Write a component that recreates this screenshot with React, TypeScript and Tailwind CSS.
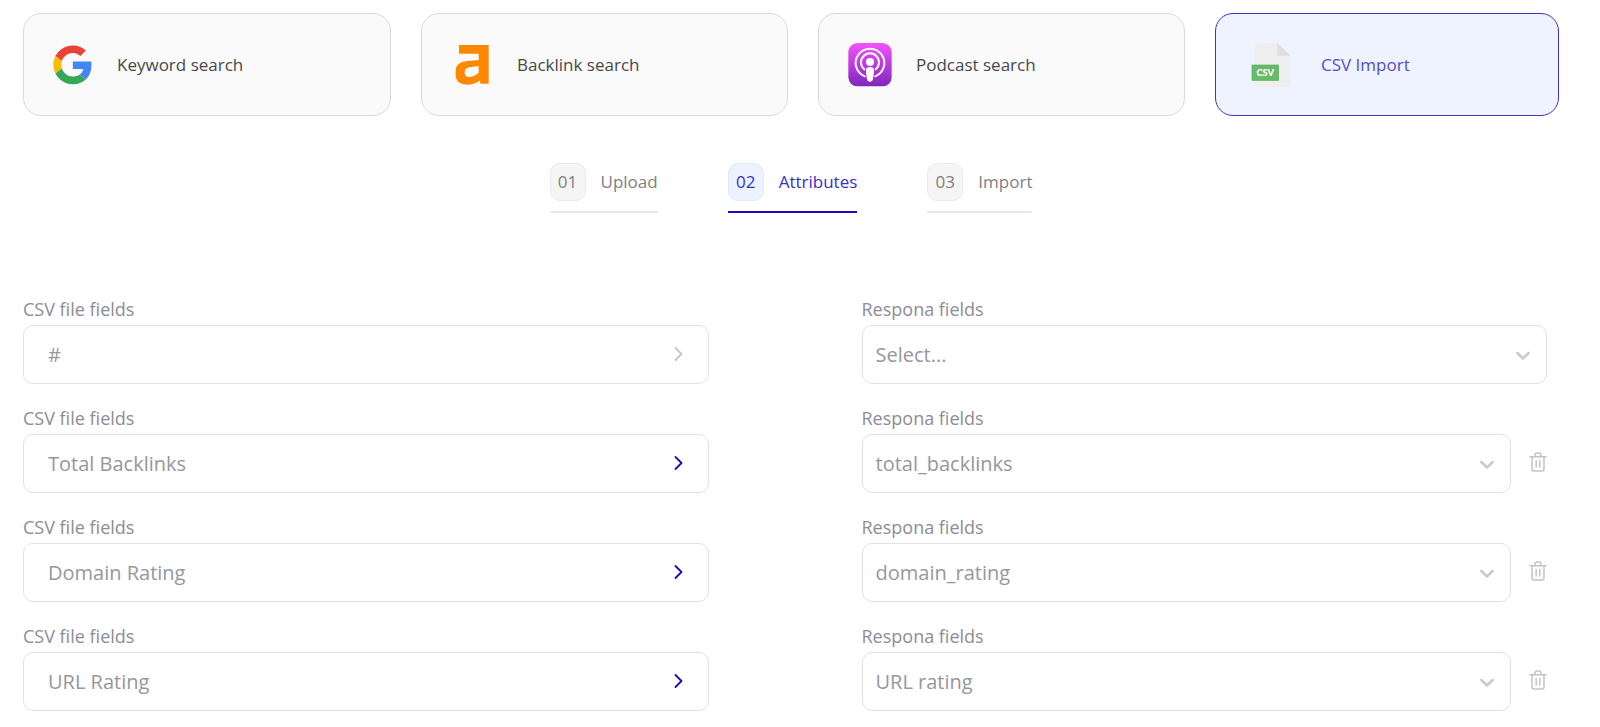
import React, { useState } from "react";
import clsx from "clsx";

interface SearchOption {
  id: string;
  label: string;
  icon: React.FC;
  spacing: string;
}

interface FieldMapping {
  id: string;
  csvField: string;
  responaField: string;
}

const GoogleIcon: React.FC = () => (
  <svg viewBox="0 0 44 44" className="size-11 shrink-0" aria-hidden="true">
    <g transform="translate(3.4 2.4) scale(.81)">
      <path
        fill="#EA4335"
        d="M24 9.5c3.54 0 6.71 1.22 9.21 3.6l6.85-6.85C35.9 2.38 30.47 0 24 0 14.62 0 6.51 5.38 2.56 13.22l7.98 6.19C12.43 13.72 17.74 9.5 24 9.5z"
      />
      <path
        fill="#4285F4"
        d="M46.98 24.55c0-1.57-.15-3.09-.38-4.55H24v9.02h12.94c-.58 2.96-2.26 5.48-4.78 7.18l7.73 6c4.51-4.18 7.09-10.36 7.09-17.65z"
      />
      <path
        fill="#FBBC05"
        d="M10.53 28.59c-.48-1.45-.76-2.99-.76-4.59s.27-3.14.76-4.59l-7.98-6.19C.92 16.46 0 20.12 0 24c0 3.88.92 7.54 2.56 10.78l7.97-6.19z"
      />
      <path
        fill="#34A853"
        d="M24 48c6.48 0 11.93-2.13 15.89-5.81l-7.73-6c-2.15 1.45-4.92 2.3-8.16 2.3-6.26 0-11.57-4.22-13.47-9.91l-7.98 6.19C6.51 42.62 14.62 48 24 48z"
      />
    </g>
  </svg>
);

const AhrefsIcon: React.FC = () => (
  <svg viewBox="0 1 132 132" className="size-11 shrink-0" aria-hidden="true">
    <path
      fill="#FF8800"
      fillRule="evenodd"
      d="M27 7H116V123H91L90 113C80 122 68 126 54 126C30 126 17 115 17 96V86C17 66 29 58 52 55L86 52V33H27ZM86 70L58 74C48 76 44 81 44 90C44 98 49 103 57 103C68 103 78 98 86 91Z"
    />
  </svg>
);

const PodcastIcon: React.FC = () => (
  <svg viewBox="0 3 132 132" className="size-11 shrink-0" aria-hidden="true">
    <defs>
      <linearGradient id="podcast-bg" x1="0" y1="0" x2="0" y2="1">
        <stop offset="0" stopColor="#F452FF" />
        <stop offset="1" stopColor="#8026BD" />
      </linearGradient>
    </defs>
    <rect x="1" y="3" width="130" height="130" rx="27" fill="url(#podcast-bg)" />
    <g fill="none" stroke="#fff" strokeLinecap="round">
      <path strokeWidth="6" d="M50 103A43 43 0 1 1 82 103" />
      <path strokeWidth="6" d="M49 82A27 27 0 1 1 83 82" />
    </g>
    <circle cx="66" cy="60" r="12" fill="#fff" />
    <path
      fill="#fff"
      d="M66 75C74 75 78 78 78 84C78 92 77 102 75 111C74 117 71 119 66 119C61 119 58 117 57 111C55 102 54 92 54 84C54 78 58 75 66 75Z"
    />
  </svg>
);

const CsvIcon: React.FC = () => (
  <svg viewBox="0 0 132 132" className="size-11 shrink-0" aria-hidden="true">
    <path fill="#EEEEEE" d="M18 0H85L124 36V132H18Z" />
    <path fill="#DFDFDF" d="M85 0L124 38H85Z" />
    <rect x="9" y="66" width="80" height="46" fill="#66BB6A" stroke="#57AE5B" strokeWidth="2" />
    <text
      x="49"
      y="99"
      textAnchor="middle"
      fill="#fff"
      fontFamily="Lato, sans-serif"
      fontWeight="900"
      fontSize="28"
    >
      CSV
    </text>
  </svg>
);

const ChevronRight: React.FC<{ className?: string }> = ({ className }) => (
  <svg viewBox="0 0 10 16" className={clsx("h-4 w-2.5 shrink-0", className)} aria-hidden="true">
    <path
      d="M1.5 1L7.5 7L1.5 13"
      fill="none"
      stroke="currentColor"
      strokeWidth="1.8"
      strokeLinecap="round"
      strokeLinejoin="round"
    />
  </svg>
);

const ChevronDown: React.FC = () => (
  <svg
    viewBox="0 0 20 20"
    fill="#cccccc"
    className="pointer-events-none absolute top-[18px] right-3 size-6"
    aria-hidden="true"
  >
    <path d="M4.516 7.548c0.436-0.446 1.043-0.481 1.576 0l3.908 3.747 3.908-3.747c0.533-0.481 1.141-0.446 1.574 0 0.436 0.445 0.408 1.197 0 1.615-0.406 0.418-4.695 4.502-4.695 4.502-0.217 0.223-0.502 0.335-0.787 0.335s-0.57-0.112-0.789-0.335c0 0-4.287-4.084-4.695-4.502s-0.436-1.17 0-1.615z" />
  </svg>
);

const TrashIcon: React.FC = () => (
  <svg
    viewBox="0 0 18 20"
    fill="none"
    stroke="currentColor"
    strokeWidth="1.5"
    strokeLinecap="round"
    strokeLinejoin="round"
    className="h-5 w-[18px]"
    aria-hidden="true"
  >
    <path d="M1 4.7H17" />
    <path d="M6 4.5V3C6 1.8 6.8 1 8 1H10C11.2 1 12 1.8 12 3V4.5" />
    <path d="M3 5V17C3 18.3 3.7 19 5 19H13C14.3 19 15 18.3 15 17V5" />
    <path d="M7.2 8.5V15M10.8 8.5V15" />
  </svg>
);

const searchOptions: SearchOption[] = [
  { id: "keyword", label: "Keyword search", icon: GoogleIcon, spacing: "pl-[26px] gap-[23px]" },
  { id: "backlink", label: "Backlink search", icon: AhrefsIcon, spacing: "pl-7 gap-[23px]" },
  { id: "podcast", label: "Podcast search", icon: PodcastIcon, spacing: "pl-[29px] gap-6" },
  { id: "csv", label: "CSV Import", icon: CsvIcon, spacing: "pl-[33px] gap-7" },
];

const steps = [
  { number: "01", label: "Upload" },
  { number: "02", label: "Attributes" },
  { number: "03", label: "Import" },
];

const initialMappings: FieldMapping[] = [
  { id: "position", csvField: "#", responaField: "" },
  { id: "total-backlinks", csvField: "Total Backlinks", responaField: "total_backlinks" },
  { id: "domain-rating", csvField: "Domain Rating", responaField: "domain_rating" },
  { id: "url-rating", csvField: "URL Rating", responaField: "URL rating" },
];

const responaFields = ["total_backlinks", "domain_rating", "URL rating"];

const CsvImport: React.FC = () => {
  const [selectedOption, setSelectedOption] = useState("csv");
  const [activeStep, setActiveStep] = useState("02");
  const [mappings, setMappings] = useState<FieldMapping[]>(initialMappings);

  const handleChange = (id: string, value: string) => {
    setMappings((prev) =>
      prev.map((row) => (row.id === id ? { ...row, responaField: value } : row))
    );
  };

  return (
    <main className="bg-white pt-[13px] pr-[41px] pb-4 pl-[23px] font-['Open_Sans',sans-serif]">
      <div className="grid grid-cols-[368fr_367fr_367fr_344fr] gap-[30px]">
        {searchOptions.map(({ id, label, icon: Icon, spacing }) => (
          <button
            key={id}
            type="button"
            onClick={() => setSelectedOption(id)}
            className={clsx(
              "flex h-[103px] items-center rounded-[18px] border text-[17px]",
              spacing,
              selectedOption === id
                ? "border-[#3b35b8] bg-[#eef3ff] text-[#544ecb]"
                : "border-[#d9d9d9] bg-[#fafafa] text-[#484848]"
            )}
          >
            <Icon />
            <span>{label}</span>
          </button>
        ))}
      </div>

      <nav className="mt-[47px] flex justify-center gap-[70px]">
        {steps.map(({ number, label }) => {
          const active = activeStep === number;
          return (
            <button
              key={number}
              type="button"
              onClick={() => setActiveStep(number)}
              className={clsx(
                "flex items-center gap-[15px] border-b-2 pb-2.5 text-[17px]",
                active ? "border-[#1a0db5] text-[#3a30c4]" : "border-[#e6eaf0] text-[#808080]"
              )}
            >
              <span
                className={clsx(
                  "flex h-[38px] w-9 items-center justify-center rounded-[10px] border",
                  active ? "border-[#e0e8fa] bg-[#edf2ff]" : "border-[#ebebeb] bg-[#f5f5f5]"
                )}
              >
                {number}
              </span>
              <span>{label}</span>
            </button>
          );
        })}
      </nav>

      <div className="mt-[84px] mr-3 flex flex-col gap-[22px]">
        {mappings.map((row) => (
          <div key={row.id} className="grid grid-cols-2 gap-[153px]">
            <div>
              <label
                htmlFor={`csv-${row.id}`}
                className="mb-1 block text-lg leading-6 text-[#8c8d96]"
              >
                CSV file fields
              </label>
              <div className="flex h-[59px] items-center rounded-[10px] border border-[#dfe2ec] px-6">
                <input
                  id={`csv-${row.id}`}
                  value={row.csvField}
                  readOnly
                  className="min-w-0 flex-1 bg-transparent text-xl text-[#96979e] outline-none"
                />
                <ChevronRight className={row.responaField ? "text-[#1a0db5]" : "text-[#c4c5ca]"} />
              </div>
            </div>

            <div>
              <label
                htmlFor={`respona-${row.id}`}
                className="mb-1 block text-lg leading-6 text-[#8c8d96]"
              >
                Respona fields
              </label>
              <div className="flex items-center gap-[18px]">
                <div className="relative flex-1">
                  <select
                    id={`respona-${row.id}`}
                    value={row.responaField}
                    onChange={(e) => handleChange(row.id, e.target.value)}
                    className="block h-[59px] w-full appearance-none rounded-[10px] border border-[#dfe2ec] bg-white px-[13px] text-xl text-[#96979e] outline-none"
                  >
                    <option value="">Select...</option>
                    {responaFields.map((field) => (
                      <option key={field} value={field}>
                        {field}
                      </option>
                    ))}
                  </select>
                  <ChevronDown />
                </div>
                {row.responaField && (
                  <button
                    type="button"
                    aria-label={`Clear ${row.csvField}`}
                    onClick={() => handleChange(row.id, "")}
                    className="pb-1 text-[#c2c3cd]"
                  >
                    <TrashIcon />
                  </button>
                )}
              </div>
            </div>
          </div>
        ))}
      </div>
    </main>
  );
};

export default CsvImport;
